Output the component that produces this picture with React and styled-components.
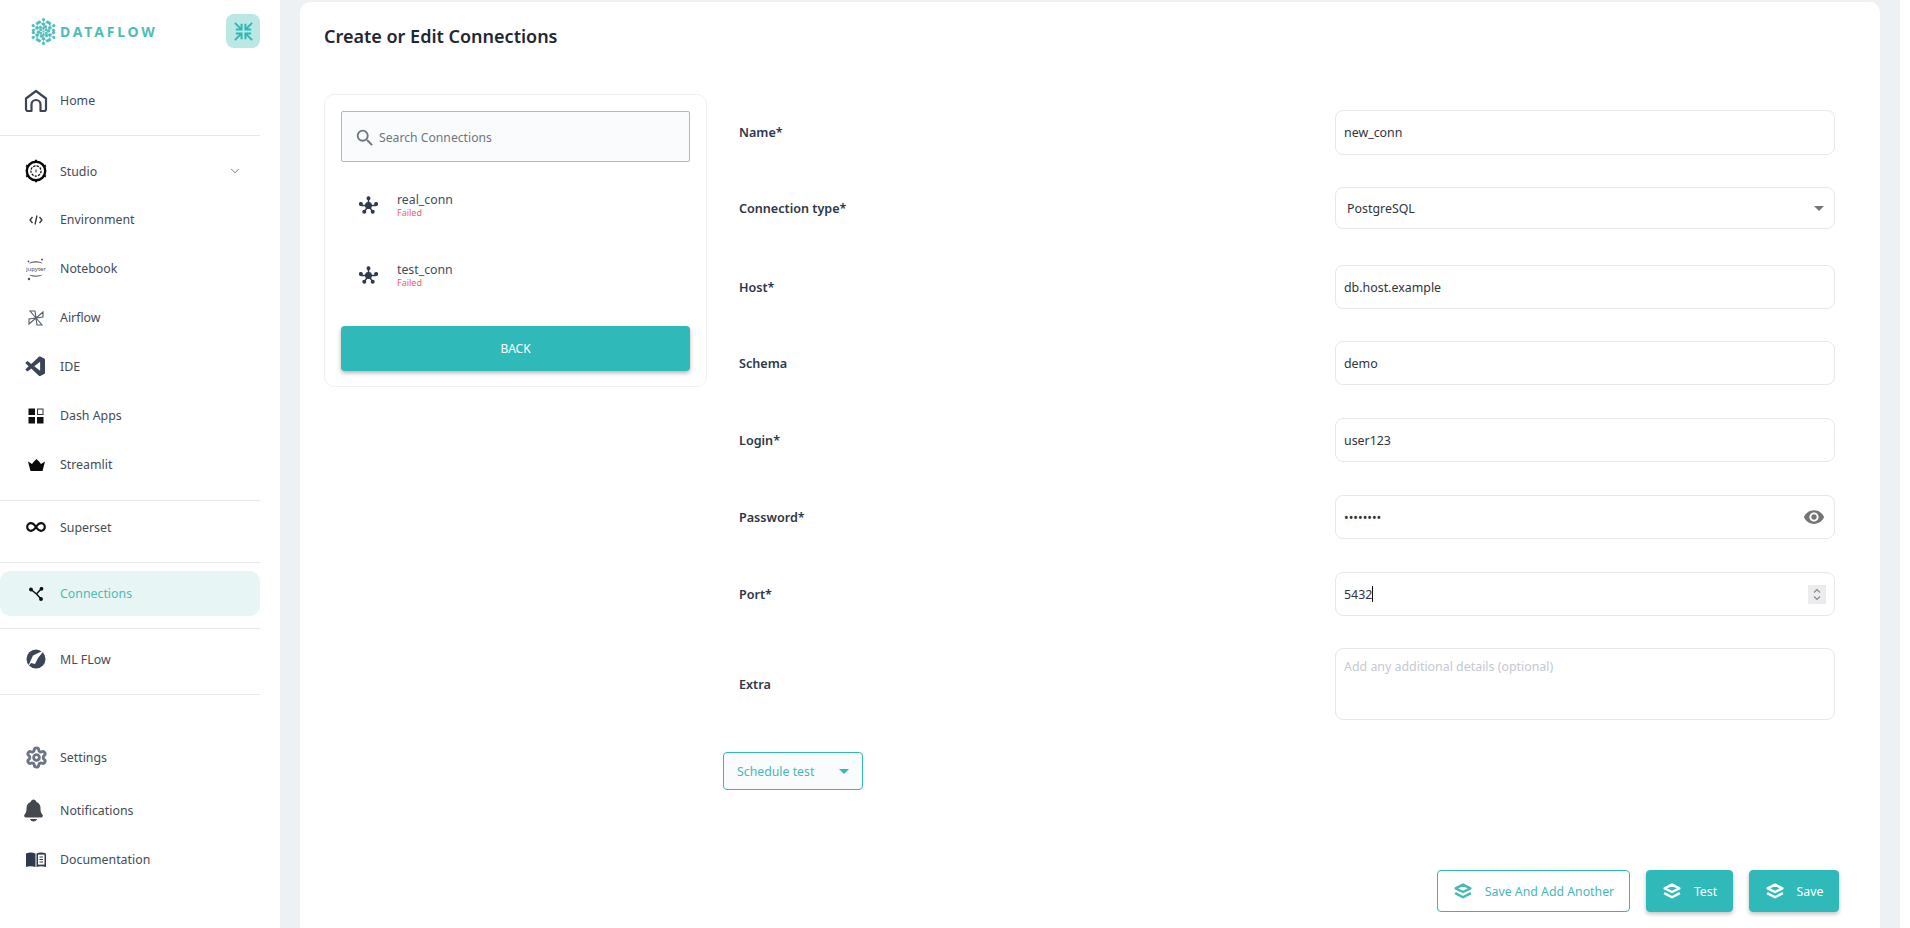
import React from "react";
import styled, { createGlobalStyle } from "styled-components";
import { FiChevronDown } from "react-icons/fi";
import { MdVisibility, MdSearch } from "react-icons/md";
import { VscVscode } from "react-icons/vsc";
import { IoNotifications } from "react-icons/io5";
import { Settings } from "lucide-react";

const GlobalStyle = createGlobalStyle`
  html, body { margin: 0; padding: 0; height: 100%; overflow: hidden; background: #fff; }
  * { box-sizing: border-box; }
  body { font-family: "Noto Sans", "Open Sans", sans-serif; color: #2d3748; }
`;

const Shell = styled.div`
  display: flex;
  width: 1910px;
  height: 928px;
  overflow: hidden;
  background: #fff;
`;

const Sidebar = styled.aside`
  width: 280px;
  flex: none;
  background: #fff;
`;

const Header = styled.div`
  height: 76px;
  width: 260px;
  padding: 14px 0 0 29px;
  display: flex;
  align-items: flex-start;
  justify-content: space-between;
`;

const Brand = styled.div`
  display: flex;
  align-items: center;
  gap: 2px;
  height: 34px;
`;

const BrandName = styled.span`
  font-size: 14px;
  font-weight: 700;
  letter-spacing: 2.8px;
  color: #4dbdb8;
`;

const CollapseButton = styled.div`
  width: 34px;
  height: 34px;
  border-radius: 8px;
  background: #b9e8e5;
  display: flex;
  align-items: center;
  justify-content: center;
`;

const Section = styled.div`
  width: 260px;
  padding-top: ${(p) => p.$top || 0}px;
  padding-bottom: ${(p) => p.$bottom || 0}px;
  border-bottom: ${(p) => (p.$plain ? "none" : "1px solid #e6e8ea")};
`;

const NavRow = styled.div`
  height: ${(p) => p.$h || 49}px;
  display: flex;
  align-items: center;
  padding-left: 24px;
  border-radius: 10px;
  background: ${(p) => (p.$active ? "#e7f5f4" : "transparent")};
`;

const IconSlot = styled.span`
  width: 24px;
  height: 24px;
  display: flex;
  align-items: center;
  justify-content: center;
  margin-right: 12px;
  flex: none;
`;

const NavLabel = styled.span`
  font-size: 12.35px;
  color: ${(p) => (p.$active ? "#4dbdb5" : "#444c58")};
  flex: 1;
`;

const Caret = styled.span`
  display: flex;
  margin-right: 18px;
  color: #444;
`;

const Bell = styled(IoNotifications)`
  margin-left: -5px;
  flex: none;
`;

const Main = styled.main`
  width: 1620px;
  flex: none;
  height: 928px;
  background: #edf1f4;
  padding: 2px 0 0 20px;
`;

const Panel = styled.section`
  width: 1580px;
  height: 926px;
  background: #fff;
  border-radius: 10px 10px 0 0;
  padding: 0 24px;
`;

const Title = styled.h1`
  margin: 0;
  height: 92px;
  padding-top: 22px;
  font-size: 18px;
  line-height: 24px;
  font-weight: 600;
  color: #1f2733;
`;

const Body = styled.div`
  display: flex;
  align-items: flex-start;
  height: 776px;
`;

const ListCard = styled.div`
  width: 383px;
  height: 293px;
  flex: none;
  border: 1px solid #f0f1f3;
  border-radius: 10px;
  padding: 16px;
`;

const SearchBox = styled.div`
  height: 51px;
  border: 1px solid #b5b7ba;
  border-radius: 2px;
  background: #f9fbfc;
  display: flex;
  align-items: center;
  padding: 2px 0 0 12px;
  gap: 3px;
  font-size: 12.2px;
  color: #6f7681;
`;

const ConnRow = styled.div`
  height: 70px;
  display: flex;
  align-items: center;
  padding-left: 18px;
  gap: 19px;
`;

const ConnText = styled.div`
  display: flex;
  flex-direction: column;
`;

const ConnName = styled.span`
  font-size: 12.3px;
  line-height: 15px;
  color: #444c58;
`;

const ConnStatus = styled.span`
  font-size: 9px;
  line-height: 12px;
  color: #f0625d;
`;

const ConnList = styled.div`
  margin-top: 8px;
  margin-bottom: 16px;
`;

const BackButton = styled.button`
  display: block;
  width: 100%;
  height: 45px;
  border: 0;
  border-radius: 4px;
  background: #2fbab9;
  color: #fff;
  font: 400 12px "Noto Sans", sans-serif;
  box-shadow: 0 2px 4px rgba(0, 0, 0, 0.3);
`;

const Form = styled.div`
  margin-left: 15px;
  width: 1113px;
  padding-top: 16px;
`;

const FieldRow = styled.div`
  display: grid;
  grid-template-columns: 596px 500px;
  align-items: center;
  padding-left: 17px;
  margin-bottom: ${(p) => p.$gap}px;
`;

const FieldLabel = styled.label`
  font-size: 12.6px;
  font-weight: 600;
  color: #2d3748;
`;

const FieldBox = styled.div`
  height: ${(p) => p.$h || 44}px;
  border: 1px solid #e6e8ea;
  border-radius: 8px;
  display: flex;
  align-items: ${(p) => (p.$top ? "flex-start" : "center")};
  justify-content: space-between;
  padding: ${(p) => (p.$top ? "9px 8px" : "0 8px")};
  font-size: 12.4px;
  color: ${(p) => (p.$muted ? "#c5c9d0" : "#30343b")};
  background: #fff;
`;

const SelectText = styled.span`
  padding-left: 3px;
`;

const CaretDown = styled.span`
  width: 0;
  height: 0;
  border-left: 5px solid transparent;
  border-right: 5px solid transparent;
  border-top: 5px solid ${(p) => p.$color || "#757575"};
  margin-right: ${(p) => p.$right || 0}px;
`;

const Eye = styled(MdVisibility)`
  margin-right: 1px;
`;

const Cursor = styled.span`
  display: inline-block;
  width: 1px;
  height: 16px;
  background: #111;
  vertical-align: -3px;
`;

const Spinner = styled.span`
  width: 18px;
  height: 19px;
  background: #ececee;
  display: flex;
  align-items: center;
  justify-content: center;
`;

const ScheduleButton = styled.div`
  width: 140px;
  height: 38px;
  margin: 32px 0 0 1px;
  border: 1px solid #2fbab9;
  border-radius: 4px;
  background: #f9fbfc;
  display: flex;
  align-items: center;
  justify-content: space-between;
  padding: 0 13px;
  font-size: 12.3px;
  color: #45b9b6;
`;

const Footer = styled.div`
  display: flex;
  justify-content: flex-end;
  gap: 16px;
  width: 1515px;
`;

const ActionButton = styled.button`
  height: 42px;
  width: ${(p) => p.$w}px;
  border-radius: 4px;
  border: 1px solid #2fbab9;
  background: ${(p) => (p.$outline ? "#fff" : "#2fbab9")};
  color: ${(p) => (p.$outline ? "#45b9b6" : "#fff")};
  box-shadow: ${(p) => (p.$outline ? "none" : "0 2px 4px rgba(0,0,0,0.25)")};
  display: flex;
  align-items: center;
  justify-content: center;
  gap: 12px;
  font: 400 12.3px "Noto Sans", sans-serif;
`;

const HomeIcon = () => (
  <svg width="24" height="24" viewBox="0 0 24 24" fill="none" stroke="#3b4557" strokeWidth="2.2" strokeLinejoin="round">
    <path d="M2 9.500 12 2l10 7.500V20a2 2 0 0 1-2 2h-3.500v-6.500a4.500 4.500 0 0 0-9 0V22H4a2 2 0 0 1-2-2z" />
  </svg>
);

const StudioIcon = () => (
  <svg width="26" height="26" viewBox="0 0 26 26" fill="none" stroke="#0a0a0a">
    <circle cx="13" cy="13" r="10" strokeWidth="2.6" />
    <circle cx="13" cy="13" r="5.500" strokeWidth="1.3" strokeDasharray="2.500 1.200" />
    <path d="M13 11.500v3" strokeWidth="1" />
    <path d="M13 .8v2.500M13 22.700v2.500M2.300 6.800l2.200 1.300M21.500 17.900l2.200 1.300M2.300 19.200l2.200-1.300M21.500 8.100l2.200-1.300" strokeWidth="2.2" />
  </svg>
);

const CodeIcon = () => (
  <svg width="14" height="12" viewBox="0 0 14 12" fill="none" stroke="#333" strokeWidth="1.3">
    <path d="M3.500 3 1 6l2.500 3M10.500 3 13 6l-2.500 3" />
    <path d="M8 1.500 6 10.500" />
  </svg>
);

const JupyterIcon = () => (
  <svg width="20" height="24" viewBox="0 0 20 24" fill="#4a5360">
    <path d="M3 6.500c3-3 10-3 14 0-4-1.500-10-1.500-14 0zM3 17.500c3 3 10 3 14 0-4 1.500-10 1.500-14 0z" />
    <circle cx="16" cy="2.500" r="1" />
    <circle cx="2.500" cy="4.500" r="0.9" />
    <circle cx="3" cy="22" r="1.200" />
    <text x="10" y="14" textAnchor="middle" fontSize="6" fontFamily="Noto Sans, sans-serif">jupyter</text>
  </svg>
);

const AirflowIcon = () => (
  <svg width="16" height="16" viewBox="0 0 16 16" fill="none" stroke="#555d69" strokeWidth="1.1">
    <path d="M8 8 2 1h5zM8 8l7-6v5zM8 8l6 7H9zM8 8l-7 6V9z" />
  </svg>
);

const DashIcon = () => (
  <svg width="16" height="16" viewBox="0 0 16 16">
    <rect x="0.5" y="0.5" width="6.500" height="6.500" fill="#111" />
    <rect x="9.500" y="1" width="5.500" height="5.500" fill="none" stroke="#333" />
    <rect x="0.5" y="9" width="6.500" height="6.500" fill="#111" />
    <rect x="9" y="9" width="6.500" height="6.500" fill="#111" />
  </svg>
);

const CrownIcon = () => (
  <svg width="17" height="12" viewBox="0 0 17 12" fill="#0a0a0a">
    <path d="M0 2.500 4 5 5.500 3l3-3 3 3L13 5l4-2.500L14.500 12h-12z" />
  </svg>
);

const InfinityIcon = () => (
  <svg width="20" height="10" viewBox="0 0 20 10" fill="none" stroke="#111" strokeWidth="2.2">
    <path d="M10 5c-1.600-2.400-3-3.800-5-3.800a3.800 3.800 0 0 0 0 7.600c2 0 3.400-1.400 5-3.800s3-3.800 5-3.800a3.800 3.800 0 0 1 0 7.600c-2 0-3.400-1.400-5-3.800z" />
  </svg>
);

const BranchIcon = () => (
  <svg width="15" height="14" viewBox="0 0 15 14" fill="#111" stroke="#111" strokeWidth="1.5">
    <path d="M2 2.500 7.500 7 12 2M7.500 7l4.500 5" fill="none" />
    <circle cx="2" cy="2.500" r="1.200" />
    <circle cx="12.500" cy="1.800" r="1.100" />
    <circle cx="12" cy="12" r="1.200" />
  </svg>
);

const MlflowIcon = () => (
  <svg width="20" height="20" viewBox="0 0 20 20">
    <circle cx="10" cy="10" r="9.500" fill="#3b4557" />
    <path d="M18.500 1 7 6.500 1.500 18.500 5 14l4 1 3-6z" fill="#fff" />
  </svg>
);

const BookIcon = () => (
  <svg width="20" height="16" viewBox="0 0 20 16">
    <path d="M0 1.500C3 .3 6 .3 9.500 1.500V15C6 14 3 14 0 15z" fill="#2f3a4c" />
    <path d="M10.500 1.500C13.500.3 16.500.3 20 1.500V15c-3.500-1-6.500-1-9.500 0z" fill="#2f3a4c" />
    <rect x="12" y="2.600" width="6.500" height="10" fill="#fff" />
    <path d="M13.500 5h3.500M13.500 7.500h3.500M13.500 10h3.500" stroke="#2f3a4c" />
  </svg>
);

const CollapseIcon = () => (
  <svg width="21" height="21" viewBox="0 0 22 22" fill="none" stroke="#2fb8b4" strokeWidth="2.1">
    <path d="M2 2l6.500 6.500M9 3v6H3M20 2l-6.500 6.500M13 3v6h6M2 20l6.500-6.500M9 19v-6H3M20 20l-6.500-6.500M13 19v-6h6" />
  </svg>
);

const HubIcon = () => (
  <svg width="19" height="19" viewBox="0 0 18 18" fill="#2f3a4c" stroke="#2f3a4c">
    <path d="M9 9V2M9 9H2M9 9h7M9 9l-4 6M9 9l4 6" strokeWidth="1.4" />
    <circle cx="9" cy="9" r="2.800" />
    <circle cx="9" cy="2.200" r="1.400" />
    <circle cx="1.800" cy="7.500" r="1.400" />
    <circle cx="16.200" cy="7.500" r="1.400" />
    <circle cx="5" cy="15" r="1.400" />
    <circle cx="13" cy="15" r="1.400" />
  </svg>
);

const LayersIcon = () => (
  <svg width="20" height="17" viewBox="0 0 19 16" fill="none" stroke="currentColor" strokeWidth="2.3" strokeLinejoin="round">
    <path d="M9.500 1.500 16.500 5 9.500 8.500 2.500 5z" />
    <path d="M2 9.500l7.500 4 7.500-4" />
  </svg>
);

const LogoMark = () => (
  <svg width="29" height="27" viewBox="0 0 28 26" fill="#4dbdb8" stroke="#4dbdb8" strokeWidth="0.5">
    {[0, 60, 120, 180, 240, 300].map((a) => (
      <g key={a} transform={`rotate(${a} 14 13)`}>
        <path d="M14 13 14 1.500M14 6l-4-2.500M14 6l4-2.500M14 9l-3 1M10 3.500l4 2.500" fill="none" />
        <circle cx="14" cy="1.500" r="1.300" />
        <circle cx="10" cy="4" r="1.300" />
        <circle cx="18" cy="4" r="1.300" />
        <circle cx="14" cy="6" r="1.400" />
        <circle cx="11" cy="9" r="1.300" />
        <circle cx="14" cy="10" r="1" />
      </g>
    ))}
  </svg>
);

const connections = ["real_conn", "test_conn"];

const App = () => (
  <Shell>
    <GlobalStyle />
    <Sidebar>
      <Header>
        <Brand>
          <LogoMark />
          <BrandName>DATAFLOW</BrandName>
        </Brand>
        <CollapseButton><CollapseIcon /></CollapseButton>
      </Header>
      <Section $bottom={10}>
        <NavRow><IconSlot><HomeIcon /></IconSlot><NavLabel>Home</NavLabel></NavRow>
      </Section>
      <Section $top={11} $bottom={11}>
        <NavRow $h={48}>
          <IconSlot><StudioIcon /></IconSlot>
          <NavLabel>Studio</NavLabel>
          <Caret><FiChevronDown size={14} strokeWidth={1.2} /></Caret>
        </NavRow>
        <NavRow><IconSlot><CodeIcon /></IconSlot><NavLabel>Environment</NavLabel></NavRow>
        <NavRow><IconSlot><JupyterIcon /></IconSlot><NavLabel>Notebook</NavLabel></NavRow>
        <NavRow><IconSlot><AirflowIcon /></IconSlot><NavLabel>Airflow</NavLabel></NavRow>
        <NavRow><IconSlot><VscVscode size={24} color="#3b4557" /></IconSlot><NavLabel>IDE</NavLabel></NavRow>
        <NavRow><IconSlot><DashIcon /></IconSlot><NavLabel>Dash Apps</NavLabel></NavRow>
        <NavRow><IconSlot><CrownIcon /></IconSlot><NavLabel>Streamlit</NavLabel></NavRow>
      </Section>
      <Section $top={2} $bottom={11}>
        <NavRow $h={48}><IconSlot><InfinityIcon /></IconSlot><NavLabel>Superset</NavLabel></NavRow>
      </Section>
      <Section $top={8} $bottom={12}>
        <NavRow $h={45} $active><IconSlot><BranchIcon /></IconSlot><NavLabel $active>Connections</NavLabel></NavRow>
      </Section>
      <Section $top={6} $bottom={11}>
        <NavRow $h={48}><IconSlot><MlflowIcon /></IconSlot><NavLabel>ML FLow</NavLabel></NavRow>
      </Section>
      <Section $top={36} $plain>
        <NavRow $h={53}><IconSlot><Settings size={23} strokeWidth={3} color="#6b7585" /></IconSlot><NavLabel>Settings</NavLabel></NavRow>
        <NavRow $h={53}><IconSlot><Bell size={25} color="#44494f" /></IconSlot><NavLabel>Notifications</NavLabel></NavRow>
        <NavRow $h={45}><IconSlot><BookIcon /></IconSlot><NavLabel>Documentation</NavLabel></NavRow>
      </Section>
    </Sidebar>
    <Main>
      <Panel>
        <Title>Create or Edit Connections</Title>
        <Body>
          <ListCard>
            <SearchBox>
              <MdSearch size={22} color="#6f7681" />
              Search Connections
            </SearchBox>
            <ConnList>
              {connections.map((name) => (
                <ConnRow key={name}>
                  <HubIcon />
                  <ConnText>
                    <ConnName>{name}</ConnName>
                    <ConnStatus>Failed</ConnStatus>
                  </ConnText>
                </ConnRow>
              ))}
            </ConnList>
            <BackButton>BACK</BackButton>
          </ListCard>
          <Form>
            <FieldRow $gap={32}><FieldLabel>Name*</FieldLabel><FieldBox $h={45}>new_conn</FieldBox></FieldRow>
            <FieldRow $gap={36}>
              <FieldLabel>Connection type*</FieldLabel>
              <FieldBox $h={42}><SelectText>PostgreSQL</SelectText><CaretDown $right={2} /></FieldBox>
            </FieldRow>
            <FieldRow $gap={32}><FieldLabel>Host*</FieldLabel><FieldBox>db.host.example</FieldBox></FieldRow>
            <FieldRow $gap={33}><FieldLabel>Schema</FieldLabel><FieldBox>demo</FieldBox></FieldRow>
            <FieldRow $gap={33}><FieldLabel>Login*</FieldLabel><FieldBox>user123</FieldBox></FieldRow>
            <FieldRow $gap={33}>
              <FieldLabel>Password*</FieldLabel>
              <FieldBox>
                <span>••••••••</span>
                <Eye size={22} color="#757575" />
              </FieldBox>
            </FieldRow>
            <FieldRow $gap={32}>
              <FieldLabel>Port*</FieldLabel>
              <FieldBox>
                <span>5432<Cursor /></span>
                <Spinner>
                  <svg width="10" height="15" viewBox="0 0 10 15" fill="none" stroke="#8a8a8a" strokeWidth="1.2">
                    <path d="M2 5.500 5 2.500l3 3M2 9.500l3 3 3-3" />
                  </svg>
                </Spinner>
              </FieldBox>
            </FieldRow>
            <FieldRow $gap={0}>
              <FieldLabel>Extra</FieldLabel>
              <FieldBox $h={72} $top $muted>Add any additional details (optional)</FieldBox>
            </FieldRow>
            <ScheduleButton>
              Schedule test
              <CaretDown $color="#2fbab9" />
            </ScheduleButton>
          </Form>
        </Body>
        <Footer>
          <ActionButton $outline $w={193}><LayersIcon />Save And Add Another</ActionButton>
          <ActionButton $w={87}><LayersIcon />Test</ActionButton>
          <ActionButton $w={90}><LayersIcon />Save</ActionButton>
        </Footer>
      </Panel>
    </Main>
  </Shell>
);

export default App;
